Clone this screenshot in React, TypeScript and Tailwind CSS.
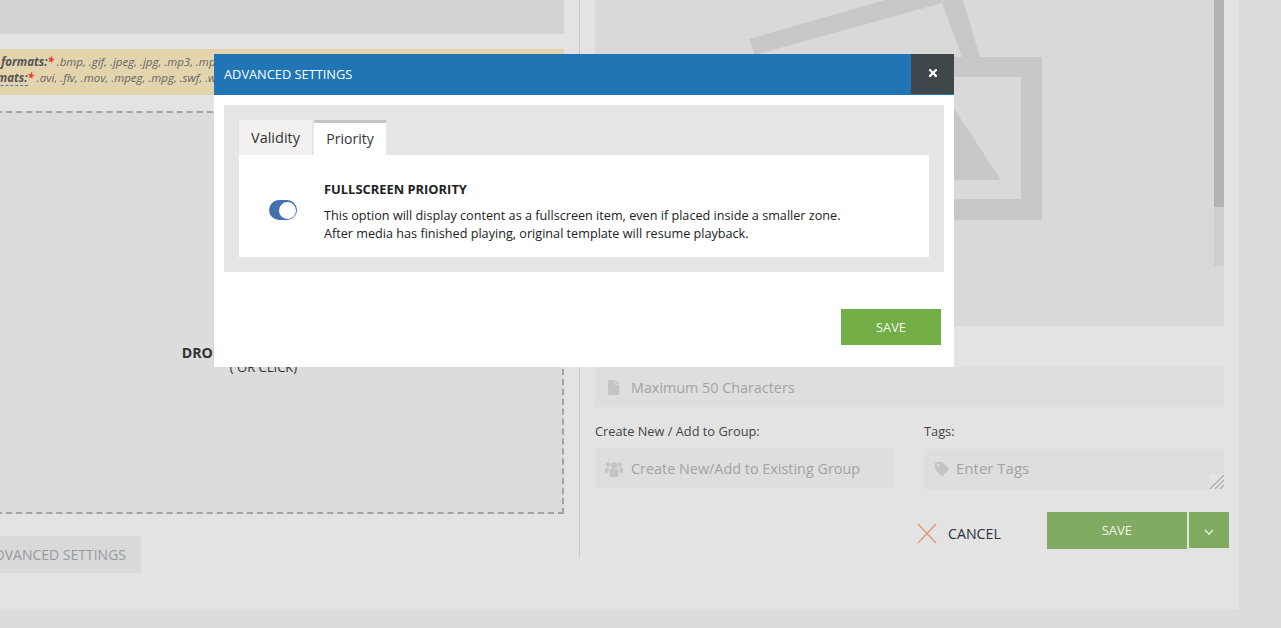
import { FaFile, FaTag, FaTimes } from "react-icons/fa";

function ImagePreview() {
  return (
    <div className="flex h-[326px] w-[629px] bg-[#d9d9d9]">
      <svg className="h-[326px] w-[619px]" viewBox="595 0 619 326">
        <polygon points="749,39 885,0 963,0 980,57 962,57 942,3 755,55" fill="#c8c8c8" />
        <path fillRule="evenodd" fill="#c8c8c8" d="M700 57H1042V220H700ZM720 77V199H1021V77Z" />
        <polygon points="900,180 940,90 955,110 1001,180" fill="#c8c8c8" />
      </svg>
      <div className="flex w-[10px] flex-col">
        <div className="h-[207px] bg-[#b3b3b3]" />
        <div className="h-[59px] bg-[#cfcfcf]" />
      </div>
    </div>
  );
}

function GroupIcon() {
  return (
    <svg className="h-[16px] w-[18px] shrink-0" viewBox="0 0 18 16" fill="#c4c4c4">
      <circle cx="9" cy="4.5" r="3.2" />
      <circle cx="3.2" cy="3.6" r="2.2" />
      <circle cx="14.8" cy="3.6" r="2.2" />
      <path d="M4.5 9.5C4.5 8.5 5.5 8 6.5 8H11.5C12.5 8 13.5 8.5 13.5 9.5V15C13.5 15.6 13 16 12.5 16H5.5C5 16 4.5 15.6 4.5 15Z" />
      <path d="M0 8C0 7 .8 6.4 1.8 6.4H4.2C4 7 3.4 7.6 3.4 9V11.8H1C.4 11.8 0 11.4 0 10.8Z" />
      <path d="M18 8C18 7 17.2 6.4 16.2 6.4H13.8C14 7 14.6 7.6 14.6 9V11.8H17C17.6 11.8 18 11.4 18 10.8Z" />
    </svg>
  );
}

function Modal() {
  return (
    <div className="absolute left-[214px] top-[54px] flex h-[313px] w-[740px] flex-col bg-white">
      <div className="flex h-[41px] items-start justify-between bg-[#2075b5]">
        <div className="pl-[10px] pt-[12px] text-[12.8px] leading-[17px] text-white">ADVANCED SETTINGS</div>
        <div className="flex h-[40px] w-[43px] items-center justify-center bg-[#40474a] pb-[2px] text-[12px] text-white">
          <FaTimes />
        </div>
      </div>
      <div className="mx-[10px] mt-[10px] h-[167px] bg-[#e5e5e5] px-[15px] pt-[15px]">
        <div className="flex h-[35px] gap-[2px] leading-[20px] text-[#333]">
          <div className="flex h-[35px] w-[73px] items-center justify-center bg-[#f2f1f0] text-[14.5px]">Validity</div>
          <div className="flex h-[35px] w-[72px] items-center justify-center border-t-[3px] border-[#c4c4c4] bg-white pb-[1px] text-[14px]">
            Priority
          </div>
        </div>
        <div className="flex h-[102px] bg-white">
          <div className="flex w-[85px] items-center pl-[30px] pt-[8px]">
            <div className="flex h-[20px] w-[28px] items-center justify-end rounded-full bg-[#4470ad] pr-[1px]">
              <div className="h-[17px] w-[17px] rounded-full bg-white" />
            </div>
          </div>
          <div className="pt-[25px] leading-[18px] text-[#222]">
            <div className="text-[12.9px] font-bold">FULLSCREEN PRIORITY</div>
            <div className="mt-[8px] text-[12.65px]">
              This option will display content as a fullscreen item, even if placed inside a smaller zone.
            </div>
            <div className="text-[12.65px]">After media has finished playing, original template will resume playback.</div>
          </div>
        </div>
      </div>
      <div className="flex justify-end pr-[13px] pt-[37px]">
        <div className="flex h-[36px] w-[100px] items-center justify-center bg-[#72ad46] pt-[1px] text-[12.8px] text-[#f1f7ea]">
          SAVE
        </div>
      </div>
    </div>
  );
}

export default function App() {
  return (
    <div className="relative h-[628px] w-[1281px] overflow-hidden bg-[#dcdcdc] font-['Open_Sans',sans-serif]">
      <div className="flex h-[609px] w-[1239px] bg-[#e3e3e3]">
        {/* Upload column, its left part runs off the page */}
        <div className="-ml-[34px] w-[598px] shrink-0">
          <div className="h-[34px] bg-[#d2d2d2]" />
          <div className="mt-[15px] h-[46px] bg-[#e4d4ad] pl-[35px] pt-[5px] text-[11.5px] italic leading-[16px] text-[#666] whitespace-nowrap">
            <div>
              <span className="font-bold text-[#555]">formats:</span>
              <span className="font-bold text-[#e33]">*</span> .bmp, .gif, .jpeg, .jpg, .mp3, .mp4, .png
            </div>
            <div className="-ml-[20px]">
              <span className="border-b border-dashed border-[#3b82c4] font-bold text-[#555]">formats:</span>
              <span className="font-bold text-[#e33]">*</span> .avi, .flv, .mov, .mpeg, .mpg, .swf, .wmv
            </div>
          </div>
          <div className="mt-[16px] flex h-[403px] flex-col items-center border-2 border-dashed border-[#a3a3a3] bg-[#dcdcdc] pr-[3px] pt-[232px] text-[#333]">
            <div className="text-[14.2px] font-bold leading-[15px]">DROP YOUR FILES HERE</div>
            <div className="text-[13px] leading-[15px]">( OR CLICK)</div>
          </div>
          <div className="mt-[22px] flex h-[37px] w-[175px] items-center justify-end whitespace-nowrap bg-[#d7d9db] pr-[15px] text-[14px] text-[#999]">
            ADVANCED SETTINGS
          </div>
        </div>

        <div className="ml-[15px] h-[557px] w-px bg-[#c9c9c9]" />

        {/* Details column */}
        <div className="ml-[15px] w-[634px] shrink-0">
          <div className="w-[629px]">
            <ImagePreview />
            <div className="mt-[41px] flex h-[40px] items-center gap-[10px] bg-[#dedede] pl-[11px] pt-[1px] text-[14.35px] text-[#a3a3a3]">
              <FaFile className="text-[15px] text-[#c4c4c4]" />
              <span>Maximum 50 Characters</span>
            </div>
            <div className="mt-[16px] flex gap-[30px]">
              <div className="w-[299px]">
                <div className="h-[17px] text-[12.8px] leading-[17px] text-[#444]">Create New / Add to Group:</div>
                <div className="mt-[8px] flex h-[40px] items-center gap-[8px] bg-[#dedede] pl-[10px] pt-[1px] text-[14.4px] text-[#a3a3a3]">
                  <GroupIcon />
                  <span>Create New/Add to Existing Group</span>
                </div>
              </div>
              <div className="w-[300px]">
                <div className="h-[17px] text-[12.8px] leading-[17px] text-[#444]">Tags:</div>
                <div className="relative mt-[9px] flex h-[40px] items-center gap-[7px] bg-[#dedede] pb-[1px] pl-[11px] text-[15px] text-[#a3a3a3]">
                  <FaTag className="text-[14px] text-[#c4c4c4]" />
                  <span>Enter Tags</span>
                  <svg className="absolute bottom-0 right-0 h-[15px] w-[15px] bg-[#e3e3e3]" viewBox="0 0 15 15">
                    <path d="M1 15L15 1M6 15L15 6M11 15L15 11" stroke="#aaa" strokeWidth="1.2" />
                  </svg>
                </div>
              </div>
            </div>
          </div>
          <div className="mt-[23px] flex items-start">
            <div className="ml-[322px] mt-[11px] flex items-center">
              <svg className="h-[21px] w-[20px]" viewBox="0 0 20 21">
                <path d="M1 1L19 20M19 1L1 20" stroke="#e0977a" strokeWidth="1.4" fill="none" />
              </svg>
              <span className="ml-[11px] text-[14.2px] leading-[20px] text-[#2a3342]">CANCEL</span>
            </div>
            <div className="ml-[46px] flex h-[37px] w-[140px] shrink-0 items-center justify-center bg-[#82ab62] text-[13px] text-[#eef5e6]">
              SAVE
            </div>
            <div className="ml-[2px] flex h-[36px] w-[40px] shrink-0 items-center justify-center bg-[#82ab62]">
              <svg className="mt-[3px] h-[6px] w-[10px]" viewBox="0 0 10 6">
                <path d="M1 1L5 5L9 1" stroke="#eef5e6" strokeWidth="1.3" fill="none" />
              </svg>
            </div>
          </div>
        </div>
      </div>
      <Modal />
    </div>
  );
}
